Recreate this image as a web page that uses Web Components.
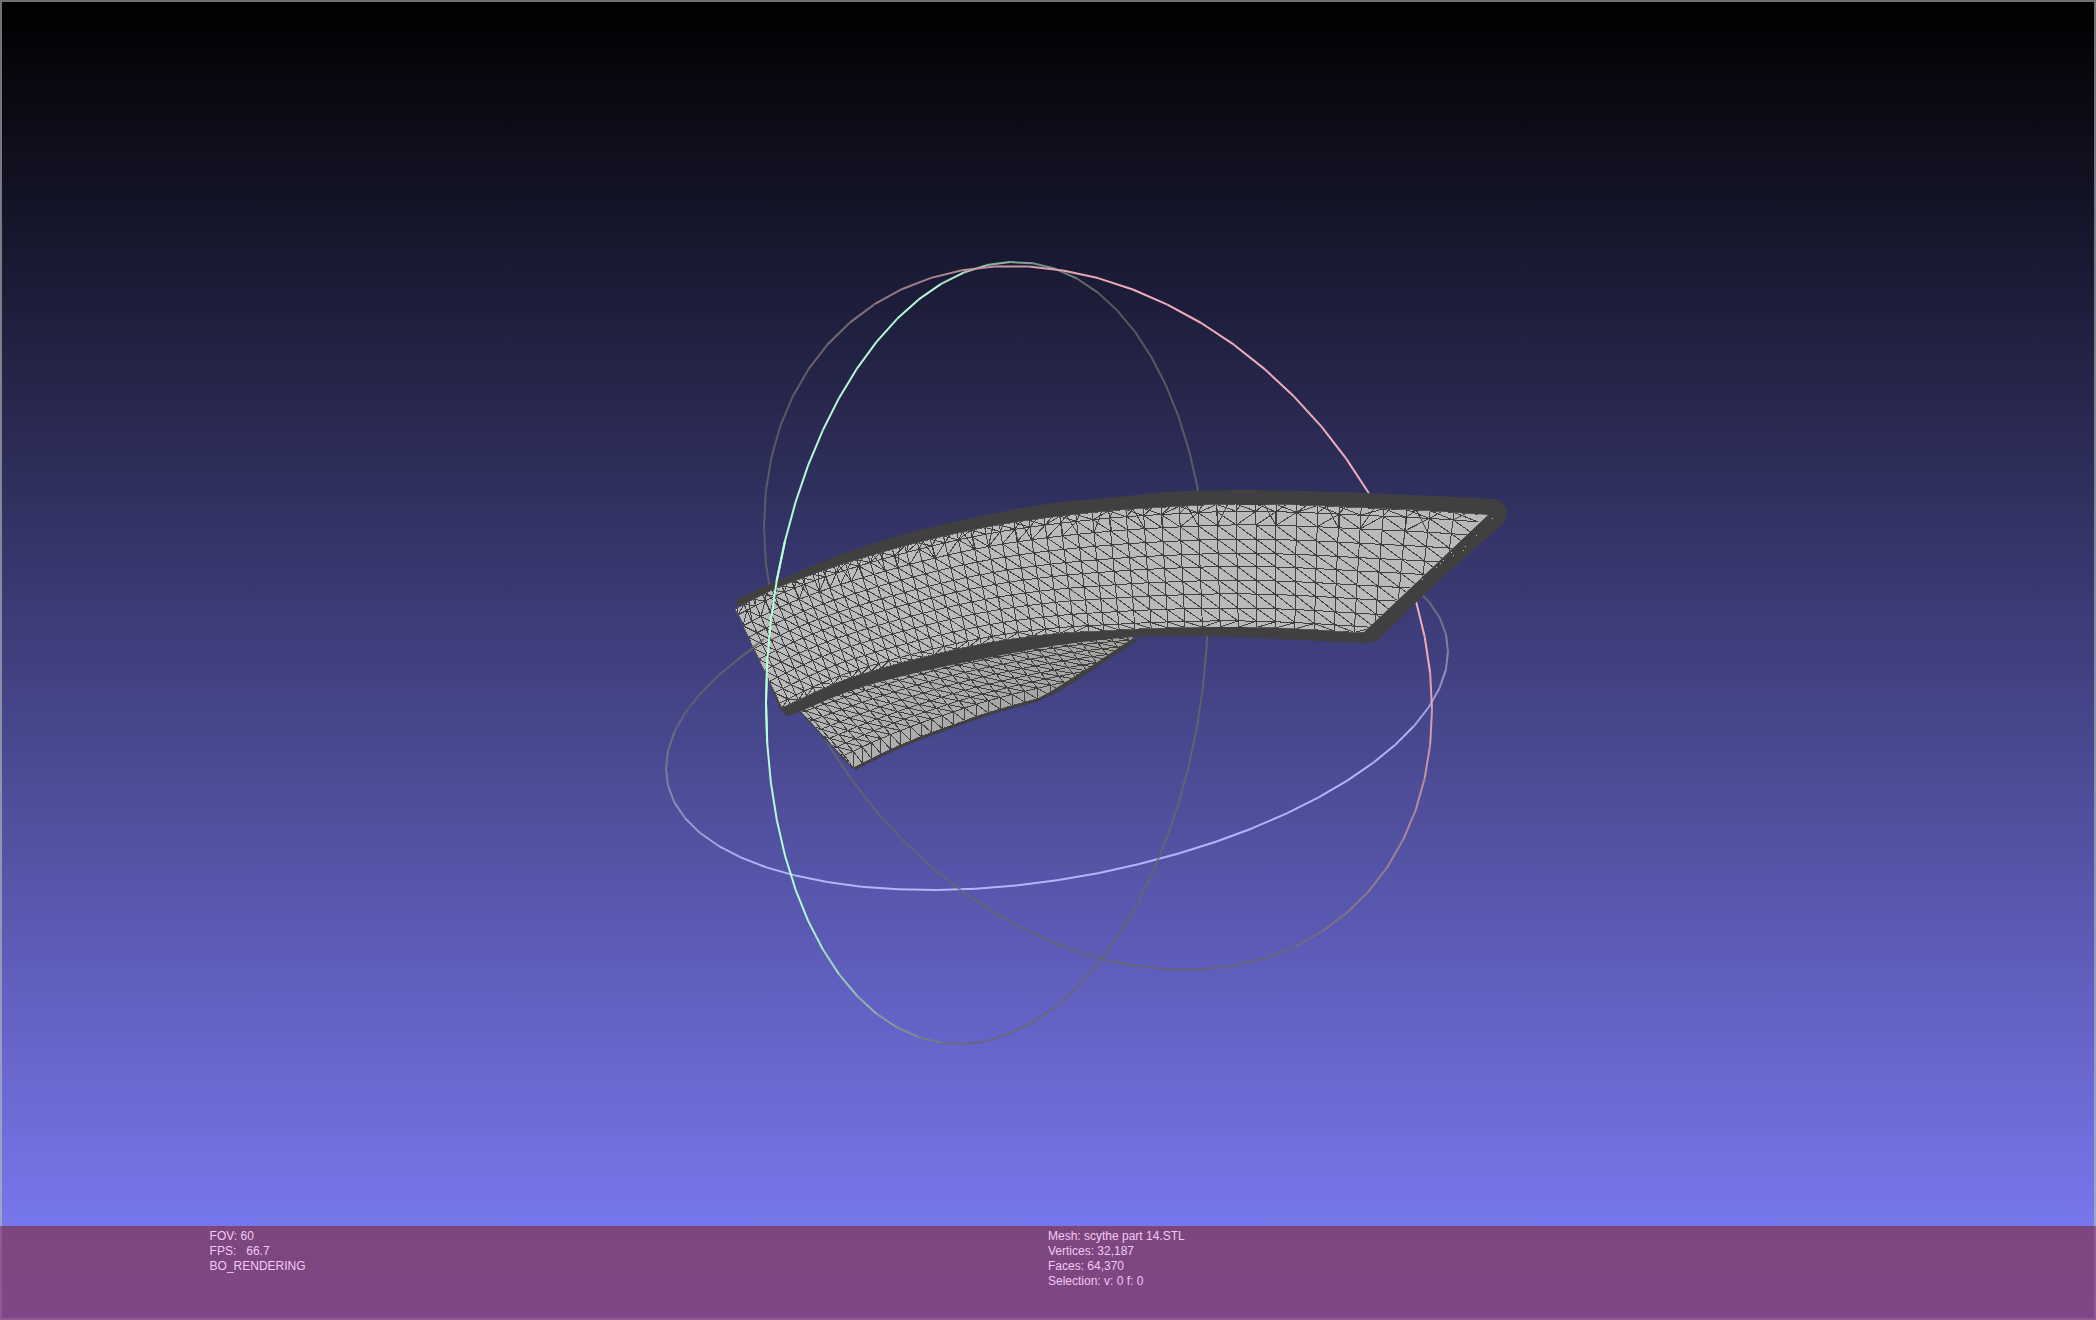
<!DOCTYPE html>
<html lang="en">
<head>
<meta charset="utf-8">
<title>Mesh viewer</title>
<style>
  body {
    margin: 0;
    background: #000;
    font-family: "Liberation Sans", Arial, sans-serif;
  }
</style>
</head>
<body>
<mesh-viewport>
  <info-bar slot="info">
    <info-lines>
      <div>FOV: 60</div>
      <div>FPS:   66.7</div>
      <div>BO_RENDERING</div>
    </info-lines>
    <info-lines>
      <div>Mesh: scythe part 14.STL</div>
      <div>Vertices: 32,187</div>
      <div>Faces: 64,370</div>
      <div>Selection: v: 0 f: 0</div>
    </info-lines>
  </info-bar>
</mesh-viewport>

<script>
/* ---------- helpers ---------- */

// smooth y(x) through a list of [x, y] points
function curve(pts) {
  const n = pts.length;
  const slope = (i) => {
    const a = pts[Math.max(0, i - 1)];
    const b = pts[Math.min(n - 1, i + 1)];
    return (b[1] - a[1]) / (b[0] - a[0]);
  };
  return (x) => {
    if (x <= pts[0][0]) return pts[0][1] + (x - pts[0][0]) * slope(0);
    if (x >= pts[n - 1][0]) return pts[n - 1][1] + (x - pts[n - 1][0]) * slope(n - 1);
    let i = 0;
    while (x > pts[i + 1][0]) i++;
    const h = pts[i + 1][0] - pts[i][0];
    const t = (x - pts[i][0]) / h;
    const t2 = t * t;
    const t3 = t2 * t;
    return (2 * t3 - 3 * t2 + 1) * pts[i][1] + (t3 - 2 * t2 + t) * h * slope(i)
      + (3 * t2 - 2 * t3) * pts[i + 1][1] + (t3 - t2) * h * slope(i + 1);
  };
}

function sample(fn, from, to) {
  const out = [];
  const steps = Math.ceil(Math.abs(to - from) / 12);
  for (let i = 0; i <= steps; i++) {
    const x = from + (to - from) * i / steps;
    out.push([x, fn(x)]);
  }
  return out;
}

const fmt = (p) => p[0].toFixed(1) + ' ' + p[1].toFixed(1);
const closed = (pts) => 'M' + pts.map(fmt).join('L') + 'Z';
const line = (a, b) => 'M' + fmt(a) + 'L' + fmt(b);

// triangulated strip between two curves
function grid({ top, bottom, shift, start, end, step, rows, fans, skirt }) {
  const cols = [];
  for (let x = start; x < end; x += step(x)) {
    const bx = x + shift(x);
    cols.push([[x, top(x)], [bx, bottom(bx)]]);
  }
  const last = rows.length - 1;
  const at = (i, r) => {
    const [a, b] = cols[i];
    // the skirt row drops straight down to the lower edge
    if (skirt && r === last) {
      const p = at(i, last - 1);
      return [p[0], bottom(p[0])];
    }
    return [a[0] + (b[0] - a[0]) * rows[r], a[1] + (b[1] - a[1]) * rows[r]];
  };
  let d = '';
  for (let i = 0; i < cols.length - 1; i++) {
    for (let r = 0; r <= last; r++) {
      d += line(at(i, r), at(i + 1, r));
      if (r === last) continue;
      d += line(at(i, r), at(i, r + 1));
      const edge = r < 2 || r === last - 1;
      const flip = fans && edge && ((i * 13 + r * 5) ^ (i >> 1)) % 5 < 2;
      d += flip
        ? line(at(i + 1, r), at(i, r + 1))
        : line(at(i, r), at(i + 1, r + 1));
    }
    // the rim is cut finer than the rest of the strip
    if (fans) {
      const k = (i * i * 3 + i) % 7;
      const a = at(i, 0);
      const b = at(i + 1, 0);
      const f = 0.25 + k * 0.08;
      const m = [a[0] + (b[0] - a[0]) * f, a[1] + (b[1] - a[1]) * f];
      if (k !== 4) d += line(m, at(i, 1));
      if (k % 3 === 1) d += line(m, at(i, 2));
      if (k % 3 === 2) d += line(m, at(i + 1, 2));
      if (i % 3 === 0) d += line(at(i, 0), [at(i, 2)[0] + 1, at(i, 2)[1]]);
    }
  }
  return d;
}

/* ---------- mesh geometry ---------- */

const faceTop = curve([[735, 609], [777, 588], [843, 564], [920, 542], [987, 527], [1053, 517], [1120, 510], [1167, 507], [1233, 504], [1300, 505], [1367, 508], [1433, 511], [1488, 515]]);
const faceBottom = curve([[782, 708], [820, 690], [853, 677], [920, 658], [987, 643], [1053, 634], [1120, 630], [1167, 628], [1233, 627], [1300, 629], [1363, 633]]);
const rimTop = curve([[735, 600], [770, 584], [853, 550], [920, 530], [987, 515], [1053, 503], [1120, 497], [1167, 492], [1250, 490], [1333, 492], [1433, 496], [1494, 499]]);
const rimBottom = curve([[792, 715], [853, 690], [920, 672], [987, 658], [1053, 646], [1120, 638], [1167, 636], [1233, 637], [1300, 640], [1367, 643]]);
const backTop = curve([[790, 704], [853, 684], [920, 665], [987, 651], [1053, 641], [1120, 635], [1180, 632]]);
const backBottom = curve([[853, 768], [885, 752], [920, 737], [953, 725], [987, 713], [1037, 699], [1120, 680], [1190, 668]]);

const front = closed([...sample(faceTop, 735, 1488), ...sample(faceBottom, 1363, 782)]);
const rim = closed([
  ...sample(rimTop, 735, 1494), [1501, 501], [1506, 507], [1507, 514], [1505, 520], [1500, 526],
  [1433, 586], [1380, 638], [1374, 642], ...sample(rimBottom, 1367, 792), [787, 716], [780, 709],
]);
const back = closed([
  [796, 706], ...sample(backTop, 800, 1135), [1132, 639], [1117, 649], [1087, 669], [1050, 692],
  ...sample(backBottom, 1037, 853),
]);
const backRim = closed([
  [853, 768], ...sample(backBottom, 856, 1037), [1050, 692], [1087, 669], [1132, 639],
  [1140, 639], [1120, 652], [1087, 674], [1053, 695], [1044, 698],
  ...sample((x) => backBottom(x) + 3, 1037, 860), [856, 770],
]);

const frontWire = grid({
  top: faceTop,
  bottom: faceBottom,
  shift: curve([[735, 47], [850, 35], [980, 22], [1114, 10], [1209, 4], [1339, -5], [1432, -14], [1500, -20]]),
  start: 735,
  end: 1500,
  step: (x) => 9 + (x - 735) * 0.0215,
  rows: [0, 0.06, 0.17, 0.285, 0.4, 0.507, 0.62, 0.73, 0.845, 0.95, 1],
  fans: true,
});
const backWire = grid({
  top: backTop,
  bottom: backBottom,
  shift: curve([[760, 62], [850, 52], [990, 40], [1120, 30]]),
  start: 760,
  end: 1150,
  step: (x) => 9 + (x - 760) * 0.02,
  rows: [0, 0.14, 0.28, 0.42, 0.56, 0.69, 0.82, 1],
  skirt: true,
});

const glints = [[1492, 518], [1476, 535], [1465, 546], [1463, 550], [1451, 552], [1453, 555], [1443, 560], [1440, 563], [1436, 567], [1422, 579]];

/* ---------- trackball ---------- */

// x = cx + rx cos t, y = cy + ry sin(t + phase); lit around the angle `peak`
const rings = [
  { cx: 1057, cy: 710, rx: 391, ry: 180, phase: -0.331, rgb: [182, 182, 255], peak: 86, half: 84, fade: 28 },
  { cx: 987, cy: 653, rx: 221, ry: 391, phase: -0.127, rgb: [182, 255, 214], peak: 200, half: 79, fade: 24 },
  { cx: 1098, cy: 618, rx: 334, ry: 352, phase: 0.263, rgb: [246, 174, 188], peak: -50, half: 74, fade: 34 },
];

function ringPoint(r, deg) {
  const t = deg * Math.PI / 180;
  return [r.cx + r.rx * Math.cos(t), r.cy + r.ry * Math.sin(t + r.phase)];
}

function ringLines(r, from = 0, to = 360) {
  const step = 6;
  let out = '';
  for (let a = from; a < to; a += step) {
    const mid = a + step / 2;
    const off = Math.abs(((mid - r.peak + 540) % 360) - 180);
    const lit = Math.min(1, Math.max(0, (r.half + r.fade - off) / (2 * r.fade)));
    const c = r.rgb.map((v) => Math.round(104 + (v - 104) * lit));
    const alpha = (0.78 + 0.2 * lit).toFixed(2);
    out += `<path d="${line(ringPoint(r, a), ringPoint(r, a + step))}" stroke="rgba(${c},${alpha})"/>`;
  }
  return out;
}

/* ---------- elements ---------- */

class TrackballRings extends HTMLElement {
  connectedCallback() {
    if (this.shadowRoot) return;
    // `over` draws only the arcs that pass in front of the model
    const over = this.hasAttribute('over');
    const lines = over
      ? ringLines(rings[1], 174, 204) + '<path d="M740 657L764 639" stroke="rgba(96,96,108,.8)"/>'
      : rings.map((r) => ringLines(r)).join('');
    this.attachShadow({ mode: 'open' }).innerHTML = `
      <style>
        :host { display: grid; min-width: 0; min-height: 0; }
        svg { display: block; width: 100%; height: 100%; }
        path { fill: none; stroke-width: 2; }
      </style>
      <svg viewBox="0 0 2096 1320" aria-hidden="true">${lines}</svg>
    `;
  }
}

class MeshModel extends HTMLElement {
  connectedCallback() {
    if (this.shadowRoot) return;
    this.attachShadow({ mode: 'open' }).innerHTML = `
      <style>
        :host { display: grid; min-width: 0; min-height: 0; }
        svg { display: block; width: 100%; height: 100%; }
        .rim { fill: #404040; }
        .wire { fill: none; stroke: #404040; stroke-width: 1; shape-rendering: crispEdges; }
      </style>
      <svg viewBox="0 0 2096 1320" role="img" aria-label="Mesh">
        <defs>
          <clipPath id="front"><path d="${front}"/></clipPath>
          <clipPath id="back"><path d="${back}"/></clipPath>
          <linearGradient id="shade" x1="0" x2="1" y1="0" y2="0">
            <stop offset="0" stop-color="#b4b4b4"/>
            <stop offset=".6" stop-color="#a8a8a8"/>
            <stop offset="1" stop-color="#a3a19d"/>
          </linearGradient>
        </defs>
        <path d="${back}" fill="url(#shade)"/>
        <path class="wire" d="${backWire}" clip-path="url(#back)"/>
        <path class="wire" d="M800 712L853 768"/>
        <path class="rim" d="${backRim}"/>
        <path class="rim" d="${rim}"/>
        <path d="${front}" fill="#bababa"/>
        <path class="wire" d="${frontWire}" clip-path="url(#front)"/>
        ${glints.map(([x, y]) => `<rect x="${x}" y="${y}" width="1" height="1" fill="#c8c8c8"/>`).join('')}
      </svg>
    `;
  }
}

class InfoLines extends HTMLElement {
  connectedCallback() {
    if (this.shadowRoot) return;
    this.attachShadow({ mode: 'open' }).innerHTML = `
      <style>
        :host {
          display: block;
          font-size: 12px;
          line-height: 15px;
          color: #f4c8f4;
        }
        ::slotted(div) { white-space: pre; }
      </style>
      <slot></slot>
    `;
  }
}

class InfoBar extends HTMLElement {
  connectedCallback() {
    if (this.shadowRoot) return;
    this.attachShadow({ mode: 'open' }).innerHTML = `
      <style>
        :host {
          display: grid;
          grid-template-columns: 4fr 5fr;
          box-sizing: border-box;
          padding: 3px 0 31px 10%;
          background: linear-gradient(#7c467d, #804787);
          box-shadow: inset 2px 0 #8e5a90, inset -2px -2px #8e5a90;
        }
      </style>
      <slot></slot>
    `;
  }
}

class MeshViewport extends HTMLElement {
  connectedCallback() {
    if (this.shadowRoot) return;
    this.attachShadow({ mode: 'open' }).innerHTML = `
      <style>
        :host {
          display: grid;
          grid-template: minmax(0, 1fr) / minmax(0, 1fr);
          height: 100vh;
          background: linear-gradient(#000, #8080ff);
          box-shadow: inset 0 0 0 2px rgba(190, 190, 190, .6);
        }
        trackball-rings, mesh-model { grid-area: 1 / 1; }
        ::slotted([slot="info"]) { grid-area: 1 / 1; align-self: end; }
      </style>
      <trackball-rings></trackball-rings>
      <mesh-model></mesh-model>
      <trackball-rings over></trackball-rings>
      <slot name="info"></slot>
    `;
  }
}

customElements.define('trackball-rings', TrackballRings);
customElements.define('mesh-model', MeshModel);
customElements.define('info-lines', InfoLines);
customElements.define('info-bar', InfoBar);
customElements.define('mesh-viewport', MeshViewport);
</script>
</body>
</html>
